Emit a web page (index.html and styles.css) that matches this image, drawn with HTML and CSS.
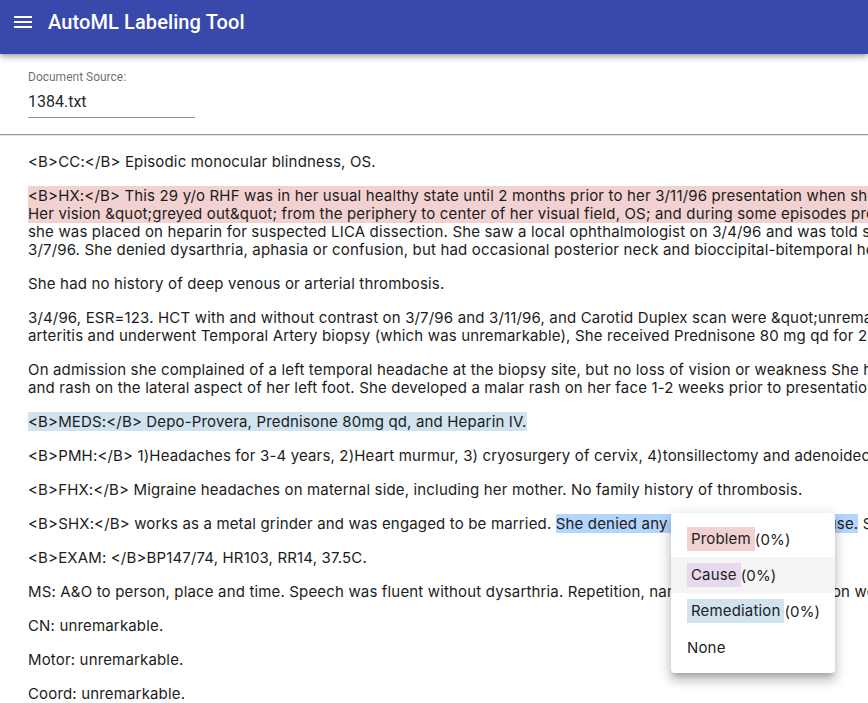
FILE: index.html
```html
<!DOCTYPE html>
<html>
<head>
<meta charset="utf-8">
<title>AutoML Labeling Tool</title>
<link rel="stylesheet" href="styles.css">
</head>
<body>
<header class="appbar">
  <div class="appbar-row">
    <button class="menu-btn" aria-label="menu">
      <svg width="24" height="24" viewBox="0 0 24 24"><path fill="#fff" d="M3 18h18v-2H3v2zm0-5h18v-2H3v2zm0-7v2h18V6H3z"/></svg>
    </button>
    <h1 class="title">AutoML Labeling Tool</h1>
  </div>
</header>

<section class="source">
  <div class="source-label">Document Source:</div>
  <div class="source-field">1384.txt</div>
</section>
<hr class="divider">

<main class="doc">
<p>&lt;B&gt;CC:&lt;/B&gt; Episodic monocular blindness, OS.</p>
<p><span class="hl-problem">&lt;B&gt;HX:&lt;/B&gt; This 29 y/o RHF was in her usual healthy state until 2 months prior to her 3/11/96 presentation when she began experiencing episodes of visual loss.
Her vision &amp;quot;greyed out&amp;quot; from the periphery to center of her visual field, OS; and during some episodes progressed to complete blindness.</span>
she was placed on heparin for suspected LICA dissection. She saw a local ophthalmologist on 3/4/96 and was told she had a normal exam.
3/7/96. She denied dysarthria, aphasia or confusion, but had occasional posterior neck and bioccipital-bitemporal headaches.</p>
<p>She had no history of deep venous or arterial thrombosis.</p>
<p>3/4/96, ESR=123. HCT with and without contrast on 3/7/96 and 3/11/96, and Carotid Duplex scan were &amp;quot;unremarkable.&amp;quot; She was treated for temporal
arteritis and underwent Temporal Artery biopsy (which was unremarkable), She received Prednisone 80 mg qd for 2 weeks.</p>
<p>On admission she complained of a left temporal headache at the biopsy site, but no loss of vision or weakness She had a history of arthralgias
and rash on the lateral aspect of her left foot. She developed a malar rash on her face 1-2 weeks prior to presentation.</p>
<p><span class="hl-remedy">&lt;B&gt;MEDS:&lt;/B&gt; Depo-Provera, Prednisone 80mg qd, and Heparin IV.</span></p>
<p>&lt;B&gt;PMH:&lt;/B&gt; 1)Headaches for 3-4 years, 2)Heart murmur, 3) cryosurgery of cervix, 4)tonsillectomy and adenoidectomy.</p>
<p>&lt;B&gt;FHX:&lt;/B&gt; Migraine headaches on maternal side, including her mother. No family history of thrombosis.</p>
<p>&lt;B&gt;SHX:&lt;/B&gt; works as a metal grinder and was engaged to be married. <span class="selected">She denied any tobacco, ETOH, drug use.</span> She was not sexually active.</p>
<p>&lt;B&gt;EXAM: &lt;/B&gt;BP147/74, HR103, RR14, 37.5C.</p>
<p>MS: A&amp;O to person, place and time. Speech was fluent without dysarthria. Repetition, naming and comprehension were intact.</p>
<p>CN: unremarkable.</p>
<p>Motor: unremarkable.</p>
<p>Coord: unremarkable.</p>
</main>

<ul class="label-menu">
  <li class="menu-item"><span class="tag tag-problem">Problem</span>(0%)</li>
  <li class="menu-item is-hover"><span class="tag tag-cause">Cause</span>(0%)</li>
  <li class="menu-item"><span class="tag tag-remedy">Remediation</span>(0%)</li>
  <li class="menu-item"><span class="tag-none">None</span></li>
</ul>
</body>
</html>
```

FILE: styles.css
```css
html, body {
  margin: 0;
  padding: 0;
  background: #fff;
  overflow: hidden;
}

body {
  font-family: Inter, "Liberation Sans", sans-serif;
  color: #1c1c1c;
  position: relative;
  min-height: 703px;
}

.appbar {
  background: #3949ab;
  height: 54px;
  box-shadow: 0 2px 4px -1px rgba(0,0,0,.2), 0 4px 5px 0 rgba(0,0,0,.14), 0 1px 10px 0 rgba(0,0,0,.12);
  position: relative;
  z-index: 2;
}

.appbar-row {
  height: 44px;
  display: flex;
  align-items: center;
  padding: 0 12px 0 11px;
  gap: 13px;
}

.menu-btn {
  border: 0;
  background: none;
  padding: 0;
  width: 24px;
  height: 24px;
  display: flex;
  cursor: pointer;
}

.title {
  margin: 0;
  font-family: Roboto, "Liberation Sans", sans-serif;
  font-weight: 500;
  font-size: 20px;
  color: #fff;
  letter-spacing: 0.1px;
}

.source {
  padding: 16px 28px 16px;
  font-family: Roboto, "Liberation Sans", sans-serif;
}

.source-label {
  font-size: 12px;
  line-height: 14px;
  color: rgba(0,0,0,.6);
}

.source-field {
  width: 167px;
  margin-top: 8px;
  font-size: 16px;
  line-height: 20px;
  padding-bottom: 5px;
  color: rgba(0,0,0,.87);
  border-bottom: 1px solid rgba(0,0,0,.42);
}

.divider {
  margin: 0;
  border: 0;
  border-top: 1px solid #9a9a9a;
  border-bottom: 1px solid #e4e4e4;
}

.doc {
  padding: 17px 28px 16px;
  overflow: hidden;
}

.doc p {
  margin: 0 0 16px;
  font-size: 15px;
  line-height: 18px;
  letter-spacing: 0.16px;
  white-space: pre;
}

.hl-problem { background: #f2d2d1; }
.hl-remedy { background: #d0e3ee; }
.selected { background: #b4d5fd; }

.label-menu {
  position: absolute;
  left: 671px;
  top: 513px;
  width: 164px;
  margin: 0;
  padding: 8px 0;
  list-style: none;
  background: #fff;
  border-radius: 4px;
  box-shadow: 0 5px 5px -3px rgba(0,0,0,.2), 0 8px 10px 1px rgba(0,0,0,.14), 0 3px 14px 2px rgba(0,0,0,.12);
  z-index: 3;
}

.menu-item {
  height: 36px;
  display: flex;
  align-items: center;
  padding: 0 16px;
  font-size: 15px;
  letter-spacing: 0.16px;
  color: #222;
}

.menu-item.is-hover { background: #f4f4f4; }

.tag {
  padding: 3px 4px;
  line-height: 18px;
}

.tag-problem { background: #f2d2d1; }
.tag-cause { background: #e8daee; }
.tag-remedy { background: #d0e3ee; }
.tag-none { padding: 3px 0; }
```
